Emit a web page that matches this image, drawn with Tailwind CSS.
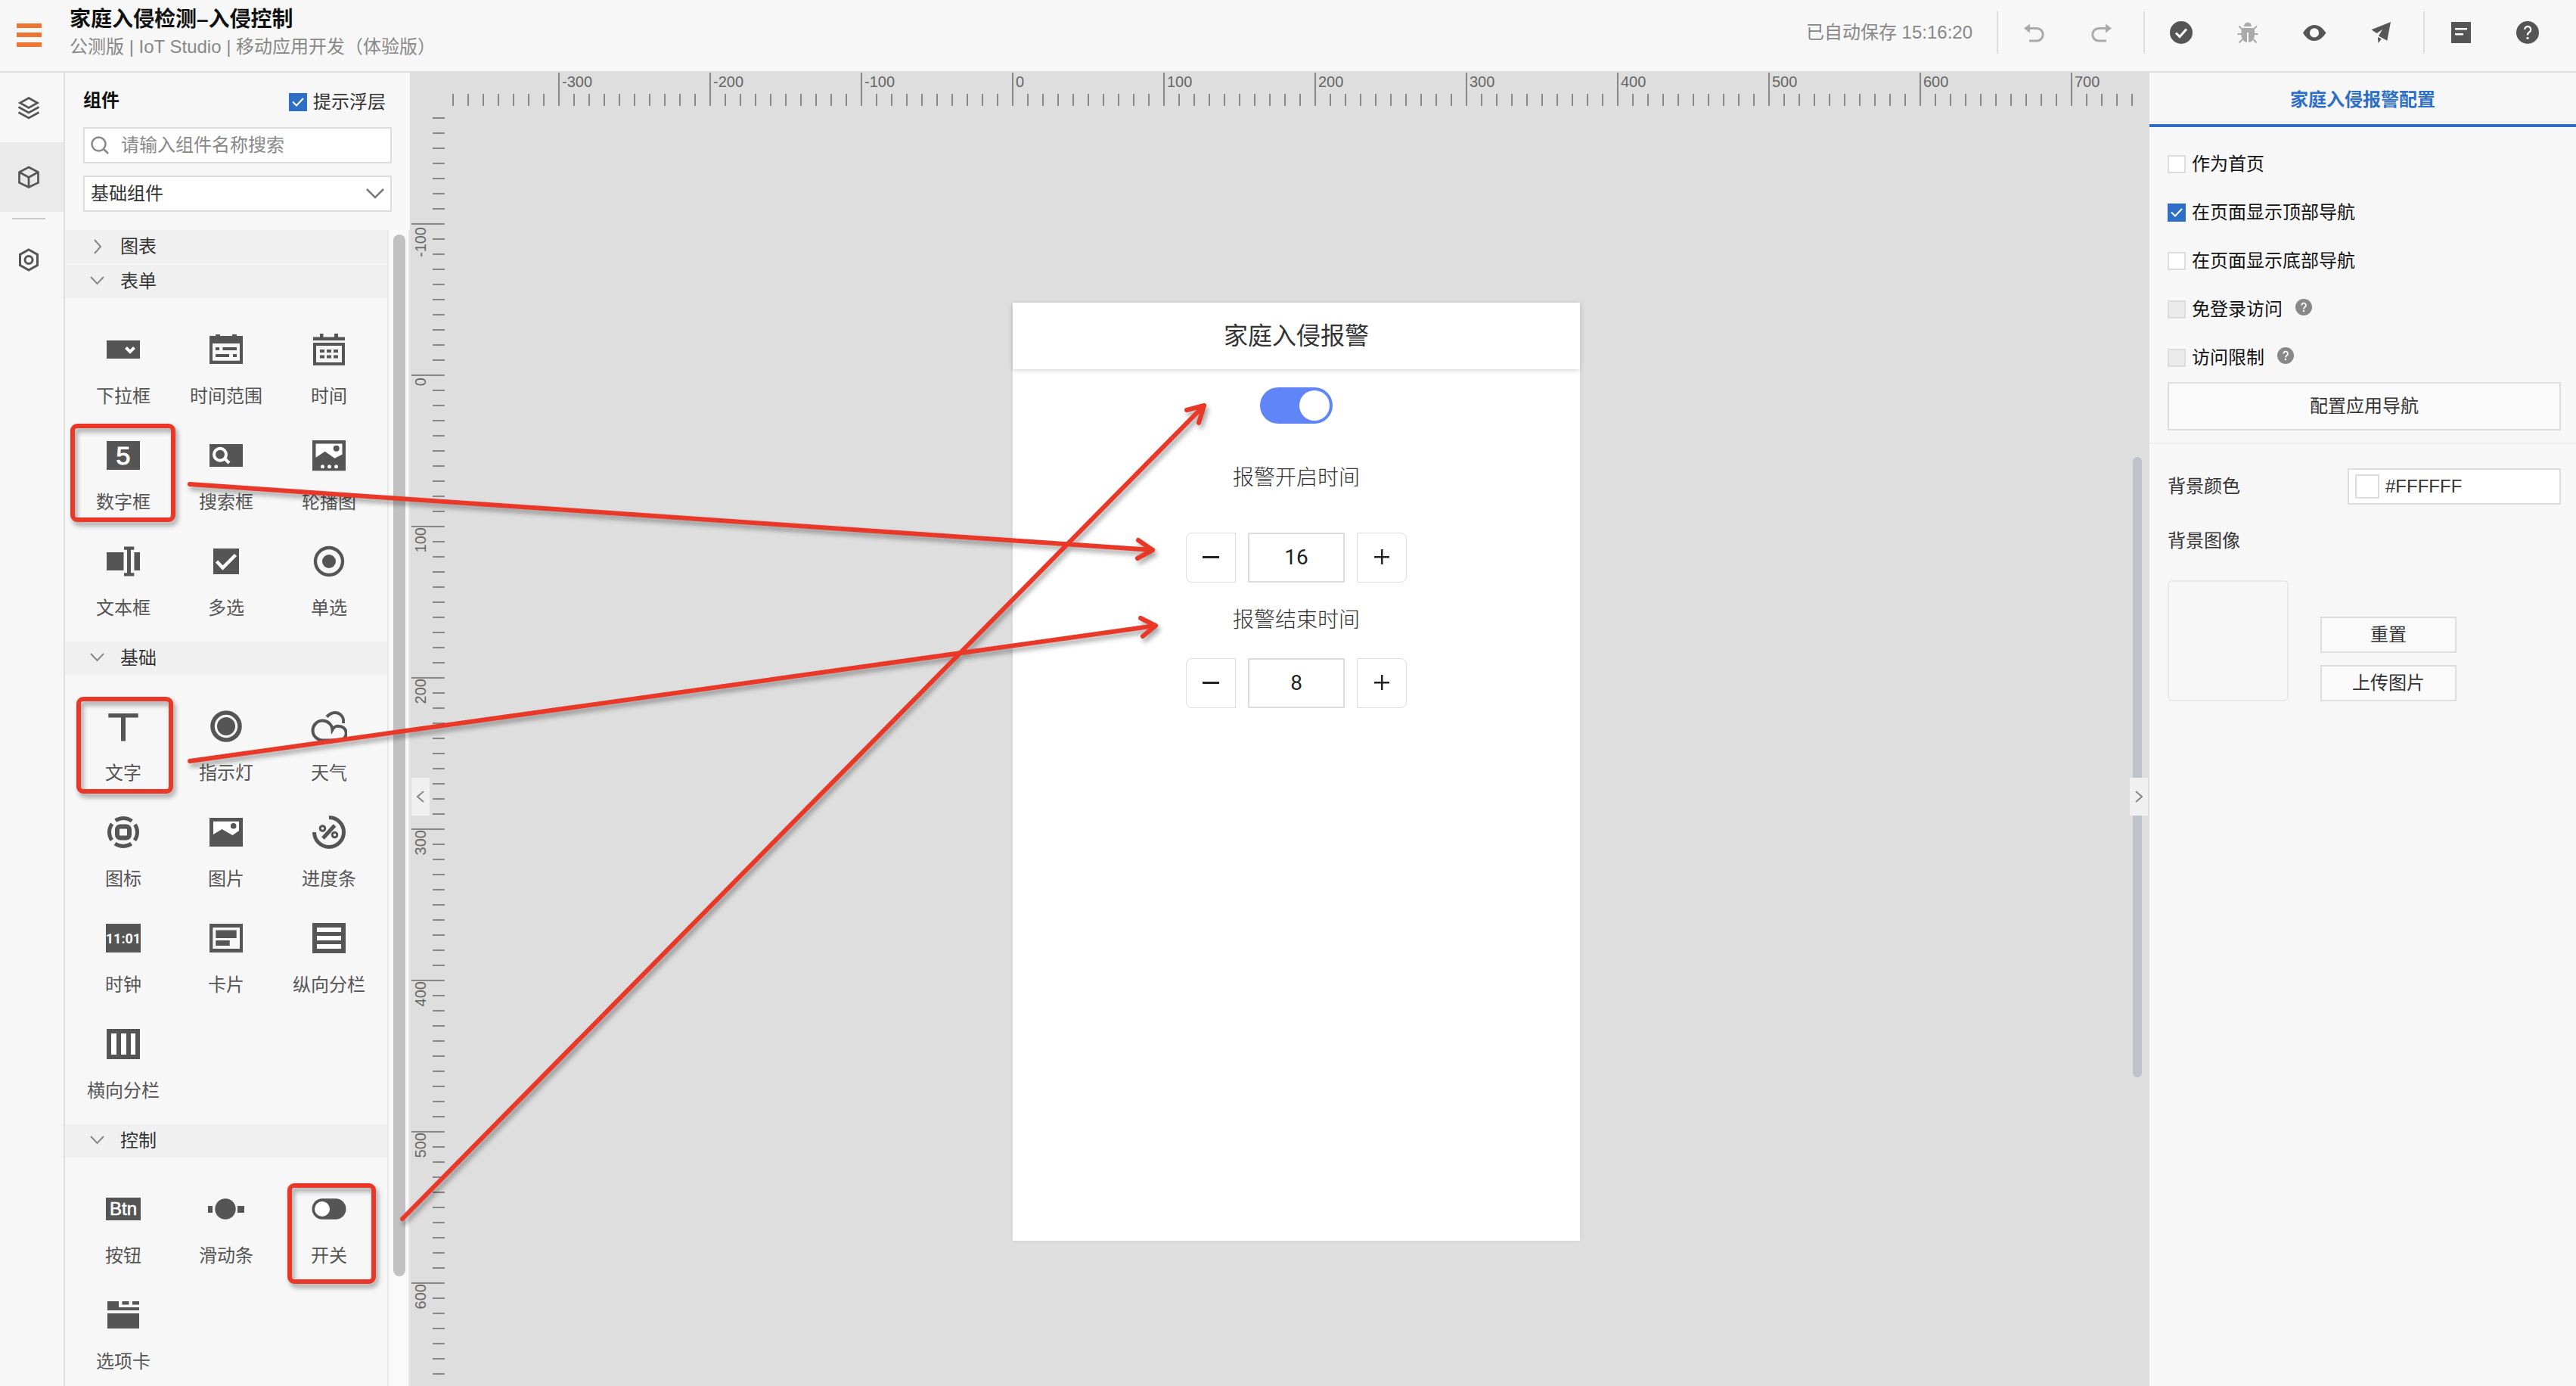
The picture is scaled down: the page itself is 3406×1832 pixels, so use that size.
<!DOCTYPE html>
<html lang="zh-CN">
<head>
<meta charset="utf-8">
<title>家庭入侵检测–入侵控制</title>
<script src="https://cdn.jsdelivr.net/npm/@tailwindcss/browser@4"></script>
</head>
<body class="relative flex h-screen flex-col overflow-hidden bg-[#f7f7f7] font-['Liberation_Sans','Noto_Sans_CJK_SC',sans-serif] text-2xl leading-8 text-[#333]">

<header class="flex h-24 shrink-0 items-center border-b-2 border-[#ddd] pr-12 pl-[22px]">
  <button aria-label="菜单" class="mr-[37px]">
    <svg class="block h-8 w-[33px]" viewBox="0 0 33 32" fill="#ec7532"><path d="M0 0h33v6H0zM0 12h33v6H0zM0 25h33v6H0z"/></svg>
  </button>
  <div class="flex flex-1 flex-col pb-1.5">
    <h1 class="text-[28px] leading-9 font-bold text-[#111]">家庭入侵检测–入侵控制</h1>
    <p class="leading-9 text-[#888]">公测版 | IoT Studio | 移动应用开发（体验版）</p>
  </div>
  <div class="flex items-center pb-2">
    <p class="pr-8 text-[#888]">已自动保存 15:16:20</p>
    <div class="flex h-14 items-center gap-14 border-l-2 border-[#ddd] pr-10 pl-8">
      <button aria-label="撤销"><svg class="block size-8" viewBox="0 0 32 32" fill="none" stroke="#aaa" stroke-width="3"><path d="M6 10.500h13a8 8 0 0 1 0 16.500h-10"/><path d="M10 4.500v12L2 10.500z" fill="#aaa" stroke="none"/></svg></button>
      <button aria-label="重做"><svg class="block size-8" viewBox="0 0 32 32" fill="none" stroke="#aaa" stroke-width="3"><path d="M26 10.500H13a8 8 0 0 0 0 16.500h10"/><path d="M22 4.500v12l8-6z" fill="#aaa" stroke="none"/></svg></button>
    </div>
    <div class="flex h-14 items-center gap-14 border-l-2 border-[#ddd] pr-10 pl-8">
      <button aria-label="检查"><svg class="block size-8" viewBox="0 0 32 32" fill="none"><circle cx="16" cy="16" r="15" fill="#555"/><path d="M9 16.500l5 5 9-10" stroke="#fff" stroke-width="3"/></svg></button>
      <button aria-label="调试"><svg class="block size-8" viewBox="0 0 32 32" fill="none" stroke="#aaa" stroke-width="2"><path d="M11 8a5 5.500 0 0 1 10 0zM7.500 10h17.500v10a8.700 9 0 0 1-17.500 0z" fill="#aaa" stroke="none"/><path d="M16 16v14" stroke="#f7f7f7"/><path d="M8 11.500L4.500 7.500M24 11.500L28 7.500M8 18H2.500M24 18h5.500M9 25l-4.500 4.500M23.500 25l4 4.500"/></svg></button>
      <button aria-label="预览"><svg class="block size-8" viewBox="0 0 32 32"><path fill="#555" fill-rule="evenodd" d="M1 16.500C5 10 10 6 16 6s11 4 15.500 10.500C27 23 22 27 16 27S5 23 1 16.500zM16 10.300a6 6 0 1 0 0 12.200 6 6 0 0 0 0-12.200z"/></svg></button>
      <button aria-label="发布"><svg class="block size-8" viewBox="0 0 32 32" fill="#555"><path d="M29 2L3.500 12.300l7 4.700L18 12l-5 8.500 11.300 6.300zM12 22l4.700 2.600L12.500 30z"/></svg></button>
    </div>
    <div class="flex h-14 items-center gap-14 border-l-2 border-[#ddd] pl-8">
      <button aria-label="文档"><svg class="block size-8" viewBox="0 0 32 32"><path fill="#555" d="M3 2h26v28H3z"/><path stroke="#fff" stroke-width="2.500" d="M8 11.300h16M8 18.300h11"/></svg></button>
      <button aria-label="帮助"><svg class="block size-8" viewBox="0 0 32 32" fill="none"><circle cx="16" cy="16" r="15" fill="#555"/><path d="M12.200 12a4 4 0 1 1 6 3.500c-1.600 1-2.200 1.800-2.200 4" stroke="#fff" stroke-width="2.300"/><circle cx="16" cy="23.300" r="1.600" fill="#fff"/></svg></button>
    </div>
  </div>
</header>

<div class="flex min-h-0 flex-1">
  <nav class="flex w-[86px] shrink-0 flex-col border-r-2 border-[#ddd] [&>button]:flex [&>button]:h-[92px] [&>button]:shrink-0 [&>button]:items-center [&>button]:pl-[22px]">
    <button aria-label="图层"><svg class="block size-8" viewBox="0 0 32 32" fill="none" stroke="#555" stroke-width="2.700"><path d="M16 3.500l11.500 6.500L16 16.500 4.500 10z"/><path d="M2.500 15.500L16 23l13.500-7.500M2.500 22.500L16 30l13.500-7.500"/></svg></button>
    <button aria-label="组件" class="bg-[#eaeaea]"><svg class="block size-8" viewBox="0 0 32 32" fill="none" stroke="#555" stroke-width="2.700"><path d="M16 3l12.500 6.500v14L16 29.500 3.500 23.500v-14zM3.500 9.500L16 16.500l12.500-7M16 16.500v13"/></svg></button>
    <div class="mt-2 mb-2 ml-4 h-0.5 w-11 bg-[#ccc]"></div>
    <button aria-label="设置"><svg class="block size-8" viewBox="0 0 32 32" fill="none" stroke="#555" stroke-width="3"><path d="M16 2l11.500 6.500v14L16 29 4.500 22.500v-14z"/><circle cx="16" cy="15.500" r="5"/></svg></button>
  </nav>

  <aside class="flex w-[456px] shrink-0 flex-col pt-6">
    <div class="flex items-start justify-between pr-8 pl-6">
      <h2 class="leading-[26px] font-bold text-[#111]">组件</h2>
      <label class="flex items-center gap-2 leading-[30px] text-[#333]">
        <span class="grid"><input type="checkbox" checked class="peer col-start-1 row-start-1 size-6 appearance-none border-2 border-[#ddd] bg-white checked:border-[#2d6fc7] checked:bg-[#2d6fc7]"><svg class="pointer-events-none col-start-1 row-start-1 hidden size-6 peer-checked:block" viewBox="0 0 24 24" fill="none" stroke="#fff" stroke-width="2"><path d="M5 11.500l5 5 9-9.500"/></svg></span>
        提示浮层
      </label>
    </div>
    <div class="mt-[18px] flex flex-col gap-4 px-6">
      <label class="flex h-12 items-center gap-4 border-2 border-[#ddd] bg-white pl-2">
        <svg class="block size-6" viewBox="0 0 24 24" fill="none" stroke="#888" stroke-width="2.500"><circle cx="10.500" cy="10.500" r="9"/><path d="M17 17l6 6"/></svg>
        <input type="text" aria-label="搜索组件" placeholder="请输入组件名称搜索" class="min-w-0 flex-1 outline-none placeholder:text-[#888]">
      </label>
      <div class="grid">
        <select aria-label="组件分类" class="col-start-1 row-start-1 h-12 appearance-none border-2 border-[#ddd] bg-white pl-2"><option>基础组件</option></select>
        <svg class="pointer-events-none col-start-1 row-start-1 mr-2.5 h-4 w-6 self-center justify-self-end" viewBox="0 0 24 16" fill="none" stroke="#777" stroke-width="2.500"><path d="M1 2l11 11L23 2"/></svg>
      </div>
    </div>

    <div class="mt-6 flex min-h-0 flex-1">
      <div class="flex-1 overflow-hidden [&_button>svg]:block [&_h3]:flex [&_h3]:h-11 [&_h3]:items-center [&_h3]:bg-[#f0f0f0] [&_h3]:pl-[33px] [&_h3>svg]:mr-5 [&_h3>svg]:h-4 [&_h3>svg]:w-5 [&_section>div]:grid [&_section>div]:grid-cols-3 [&_section>div]:px-[9px] [&_section>div]:pt-[34px] [&_section>div>button]:flex [&_section>div>button]:h-[140px] [&_section>div>button]:flex-col [&_section>div>button]:items-center [&_section>div>button]:pt-2.5 [&_section>div>button]:leading-7 [&_section>div>button]:text-[#555] [&_section>div>button>svg]:mb-6 [&_section>div>button>svg]:size-12">
        <h3 class="mb-0.5"><svg viewBox="0 0 20 16" fill="none" stroke="#888" stroke-width="2" class="overflow-visible"><path d="M6-1l8 9-8 9"/></svg>图表</h3>
        <section>
          <h3><svg viewBox="0 0 20 16" fill="none" stroke="#888" stroke-width="2"><path d="M1 2l8.500 9L18 2"/></svg>表单</h3>
          <div>
            <button><svg viewBox="0 0 48 48"><path fill="#555" d="M2 12h44v24H2z"/><path fill="none" stroke="#fff" stroke-width="4" d="M27.500 21.500l5.500 5.500 5.500-5.500"/></svg>下拉框</button>
            <button><svg viewBox="0 0 48 48" fill="#555"><path fill-rule="evenodd" d="M2 6h8V4h6v2h16V4h6v2h8v37H2zM6 16v22.700h36V16z"/><path d="M10 21h5v4h-5zM19.500 21H38v4H19.500zM10 30h18v4H10zM33 30h5v4h-5z"/></svg>时间范围</button>
            <button><svg viewBox="0 0 48 48" fill="#555"><path fill-rule="evenodd" d="M3 7.500h9V3h4.500v4.500H31V3h5v4.500h9V12H3zM3 15h42v30H3zM7 19v22h34V19z"/><path d="M12 24h6v4h-6zM21 24h6v4h-6zM30 24h6v4h-6zM12 31.500h6v4h-6zM21 31.500h6v4h-6zM30 31.500h6v4h-6z"/></svg>时间</button>
            <button><svg viewBox="0 0 48 48"><path fill="#555" d="M2 5h44v38H2z"/><text x="24" y="36" text-anchor="middle" font-family="Liberation Sans" font-size="34" fill="#fff" stroke="#fff">5</text></svg>数字框</button>
            <button><svg viewBox="0 0 48 48"><path fill="#555" d="M2 9h44v30H2z"/><g fill="none" stroke="#fff" stroke-width="4"><circle cx="16" cy="22.700" r="8"/><path d="M21.500 27.500l6.500 6.500"/></g></svg>搜索框</button>
            <button><svg viewBox="0 0 48 48"><path fill="#555" d="M2 4h44v40.300H2z"/><g fill="#fff"><path d="M6.500 8.500h35v14.200l-10 5-12.800-9-12.200 8z"/><circle cx="15.500" cy="38.700" r="2.500"/><circle cx="24.500" cy="38.700" r="2.500"/><circle cx="33.500" cy="38.700" r="2.500"/></g><circle cx="33.700" cy="14.700" r="4" fill="#555"/></svg>轮播图</button>
            <button><svg viewBox="0 0 48 48" fill="#555"><path d="M2 12h22.500v24H2zM38.500 12H46v24h-7.500zM25 4.500h13.300v4.200H34v30.500h4.300v4.200H25v-4.200h4V8.700h-4z"/></svg>文本框</button>
            <button><svg viewBox="0 0 48 48"><path fill="#555" d="M7 7h34v34H7z"/><path fill="none" stroke="#fff" stroke-width="4.500" d="M11.500 24l8 8.500 17-17"/></svg>多选</button>
            <button><svg viewBox="0 0 48 48"><circle cx="24" cy="24" r="18" fill="none" stroke="#555" stroke-width="4.300"/><circle cx="24" cy="24" r="9" fill="#555"/></svg>单选</button>
          </div>
        </section>
        <section>
          <h3><svg viewBox="0 0 20 16" fill="none" stroke="#888" stroke-width="2"><path d="M1 2l8.500 9L18 2"/></svg>基础</h3>
          <div>
            <button><svg viewBox="0 0 48 48"><path fill="#555" d="M4.300 7h39.400v5.600H27v31h-6v-31H4.300z"/></svg>文字</button>
            <button><svg viewBox="0 0 48 48"><circle cx="24" cy="24" r="18" fill="none" stroke="#555" stroke-width="5.600"/><circle cx="24" cy="24" r="12" fill="#555"/></svg>指示灯</button>
            <button><svg viewBox="0 0 48 48" fill="none" stroke="#555" stroke-width="4"><path d="M16 42.500A13 13 0 1 1 28.500 28.500C31 24 35 23.500 37 24a9 9 0 0 1 1 18.500z"/><path d="M21 11.500C31 1 45 7 43 20"/></svg>天气</button>
            <button><svg viewBox="0 0 48 48" fill="none" stroke="#555"><circle cx="24" cy="24" r="18.500" stroke-width="5" stroke-dasharray="23 6.060" stroke-dashoffset="11.500"/><rect x="16" y="16.500" width="16" height="15" rx="4" stroke-width="6"/></svg>图标</button>
            <button><svg viewBox="0 0 48 48"><path fill="#555" d="M2 5h44v38H2z"/><path fill="#fff" d="M7 9.700h34V22l-8.500 6-14-8L7 27z"/><circle cx="33.700" cy="15.800" r="3.800" fill="#555"/></svg>图片</button>
            <button><svg viewBox="0 0 48 48" fill="none" stroke="#555"><path stroke-width="5" d="M24 4.500A19.500 19.500 0 1 1 4.500 24"/><circle cx="15.500" cy="19" r="3.300" stroke-width="3"/><circle cx="31.500" cy="27.500" r="3.300" stroke-width="3"/><path stroke-width="5" d="M31.500 15L16 32"/></svg>进度条</button>
            <button><svg viewBox="0 0 48 48"><path fill="#555" d="M1 5h46v38H1z"/><text x="24" y="31" text-anchor="middle" font-family="Roboto" font-weight="700" font-size="18" fill="#fff">11:01</text></svg>时钟</button>
            <button><svg viewBox="0 0 48 48" fill="#555"><path fill-rule="evenodd" d="M2 5h44v38H2zM6.300 10v28H42V10z"/><path d="M10.300 13.400h27.400V24H10.300zM10.300 27h18.400v7H10.300z"/></svg>卡片</button>
            <button><svg viewBox="0 0 48 48"><path fill="#555" d="M2 4h44v40H2z"/><path fill="#fff" d="M8 10h32v6H8zM8 21h32v6H8zM8 32h32v6H8z"/></svg>纵向分栏</button>
            <button><svg viewBox="0 0 48 48"><path fill="#555" d="M2 4h44v40H2z"/><path fill="#fff" d="M8 10h7v28H8zM21 10h7v28h-7zM34 10h6v28h-6z"/></svg>横向分栏</button>
          </div>
        </section>
        <section>
          <h3><svg viewBox="0 0 20 16" fill="none" stroke="#888" stroke-width="2"><path d="M1 2l8.500 9L18 2"/></svg>控制</h3>
          <div>
            <button><svg viewBox="0 0 48 48"><path fill="#555" d="M1 9h46v30H1z"/><text x="24" y="32" text-anchor="middle" font-family="Liberation Sans" font-size="24" fill="#fff" stroke="#fff" stroke-width="0.600">Btn</text></svg>按钮</button>
            <button><svg viewBox="0 0 48 48" fill="#555"><circle cx="23" cy="24" r="13.700"/><path d="M0 20h6v9H0zM39 20h9v9h-9z"/></svg>滑动条</button>
            <button><svg viewBox="0 0 48 48"><rect x="1.500" y="10.300" width="45" height="27.400" rx="13.700" fill="#555"/><circle cx="15" cy="24" r="10" fill="#fff"/></svg>开关</button>
            <button><svg viewBox="0 0 48 48" fill="#555"><path d="M3 6h15v8h27v4H3zM22.500 6h9v4.500h-9zM36 6h9v4.500h-9zM3 22h42v20H3z"/></svg>选项卡</button>
          </div>
        </section>
      </div>
      <div class="w-[30px] border-x-2 border-[#e8e8e8] bg-[#fafafa] pt-1.5 pl-1.5">
        <div class="h-[90.5%] w-4 rounded-full bg-[#c1c1c1]"></div>
      </div>
    </div>
  </aside>

  <main class="relative grid min-w-0 flex-1 grid-cols-[46px_1fr] grid-rows-[44px_1fr] overflow-hidden bg-[#dedede]">
    <svg class="col-start-2 h-11 w-[calc(100%-22px)]" font-family="Liberation Sans" font-size="20" fill="#666">
      <defs><pattern id="tx" x="10" y="0" width="20" height="44" patternUnits="userSpaceOnUse"><path fill="#888" d="M0 28h2v16H0z"/></pattern></defs>
      <rect width="100%" height="100%" fill="url(#tx)"/>
      <path fill="#888" d="M150 0h2v44h-2zM350 0h2v44h-2zM550 0h2v44h-2zM750 0h2v44h-2zM950 0h2v44h-2zM1150 0h2v44h-2zM1350 0h2v44h-2zM1550 0h2v44h-2zM1750 0h2v44h-2zM1950 0h2v44h-2zM2150 0h2v44h-2z"/>
      <text x="155" y="19">-300</text><text x="355" y="19">-200</text><text x="555" y="19">-100</text><text x="755" y="19">0</text><text x="955" y="19">100</text><text x="1155" y="19">200</text><text x="1355" y="19">300</text><text x="1555" y="19">400</text><text x="1755" y="19">500</text><text x="1955" y="19">600</text><text x="2155" y="19">700</text>
    </svg>
    <svg class="col-start-1 row-start-2 h-full w-[46px]" font-family="Liberation Sans" font-size="20" fill="#666" text-anchor="end">
      <defs><pattern id="ty" x="0" y="15" width="46" height="20" patternUnits="userSpaceOnUse"><path fill="#888" d="M30 0h16v2H30z"/></pattern></defs>
      <rect width="46" height="100%" fill="url(#ty)"/>
      <path fill="#888" d="M2 155h44v2H2zM2 355h44v2H2zM2 555h44v2H2zM2 755h44v2H2zM2 955h44v2H2zM2 1155h44v2H2zM2 1355h44v2H2zM2 1555h44v2H2z"/>
      <text transform="translate(21 160) rotate(-90)">-100</text><text transform="translate(21 359) rotate(-90)">0</text><text transform="translate(21 557) rotate(-90)">100</text><text transform="translate(21 757) rotate(-90)">200</text><text transform="translate(21 957) rotate(-90)">300</text><text transform="translate(21 1157) rotate(-90)">400</text><text transform="translate(21 1357) rotate(-90)">500</text><text transform="translate(21 1557) rotate(-90)">600</text>
    </svg>
    <div class="col-start-2 row-start-2 flex items-start justify-center pt-[260px] pr-0.5">
      <div class="flex h-[1240px] w-[750px] flex-col items-center bg-white font-['Roboto','Noto_Sans_CJK_SC',sans-serif] text-[28px] leading-10 shadow-[0_0_6px_rgba(0,0,0,0.06)]">
        <h2 class="flex h-[88px] w-full items-center justify-center text-[32px] text-[#333] shadow-[0_2px_6px_rgba(0,0,0,0.15)]">家庭入侵报警</h2>
        <button role="switch" aria-checked="true" aria-label="报警开关" class="mt-6 flex h-12 w-24 justify-end rounded-full bg-[#5f85f7] p-1"><span class="size-10 rounded-full bg-white"></span></button>
        <p class="mt-[52px] font-light text-[#333]">报警开启时间</p>
        <div class="mt-[52px] flex h-[66px] gap-4 text-[#222]">
          <button aria-label="减少" class="flex w-[66px] items-center justify-center rounded-l-lg border border-[#ddd]"><svg class="size-6" viewBox="0 0 24 24"><path fill="#222" d="M1 10h22v3H1z"/></svg></button>
          <input type="text" value="16" aria-label="报警开启时间" class="w-32 border-2 border-[#ddd] text-center">
          <button aria-label="增加" class="flex w-[66px] items-center justify-center rounded-r-lg border border-[#ddd]"><svg class="size-6" viewBox="0 0 24 24"><path fill="#222" d="M2 10h9V1h2.500v9H22v2.500h-8.500V21H11v-8.500H2z"/></svg></button>
        </div>
        <p class="mt-[30px] font-light text-[#333]">报警结束时间</p>
        <div class="mt-[30px] flex h-[66px] gap-4 text-[#222]">
          <button aria-label="减少" class="flex w-[66px] items-center justify-center rounded-l-lg border border-[#ddd]"><svg class="size-6" viewBox="0 0 24 24"><path fill="#222" d="M1 10h22v3H1z"/></svg></button>
          <input type="text" value="8" aria-label="报警结束时间" class="w-32 border-2 border-[#ddd] text-center">
          <button aria-label="增加" class="flex w-[66px] items-center justify-center rounded-r-lg border border-[#ddd]"><svg class="size-6" viewBox="0 0 24 24"><path fill="#222" d="M2 10h9V1h2.500v9H22v2.500h-8.500V21H11v-8.500H2z"/></svg></button>
        </div>
      </div>
    </div>
    <div class="absolute top-[508px] right-2.5 h-[820px] w-3 rounded-full bg-[#bdc3cb]"></div>
    <button aria-label="收起左侧" class="absolute top-[932px] left-0.5 flex h-[50px] w-6 items-center justify-center bg-[#f0f0f0]"><svg class="h-4 w-2.5" viewBox="0 0 10 16" fill="none" stroke="#888" stroke-width="2"><path d="M9 1L1 8l8 7"/></svg></button>
    <button aria-label="收起右侧" class="absolute top-[932px] right-0.5 flex h-[50px] w-6 items-center justify-center bg-[#f0f0f0]"><svg class="h-4 w-2.5" viewBox="0 0 10 16" fill="none" stroke="#888" stroke-width="2"><path d="M1 1l8 7-8 7"/></svg></button>
  </main>

  <aside class="w-[564px] shrink-0">
    <div class="border-b-2 border-[#eee] pt-5 pb-3 text-center font-bold text-[#2d6fc7]">家庭入侵报警配置</div>
    <div class="mt-0.5 h-1 bg-[#2d6fc7]"></div>
    <div class="flex flex-col gap-8 px-6 pt-[33px] text-[#111] [&_input]:size-6 [&_input]:appearance-none [&_input]:border-2 [&_input]:border-[#ddd] [&_input]:bg-white [&_label]:flex [&_label]:items-center [&_label]:gap-2">
      <label><input type="checkbox">作为首页</label>
      <label><span class="grid"><input type="checkbox" checked class="peer col-start-1 row-start-1 checked:border-[#2d6fc7]! checked:bg-[#2d6fc7]!"><svg class="pointer-events-none col-start-1 row-start-1 hidden size-6 peer-checked:block" viewBox="0 0 24 24" fill="none" stroke="#fff" stroke-width="2"><path d="M5 11.500l5 5 9-9.500"/></svg></span>在页面显示顶部导航</label>
      <label><input type="checkbox">在页面显示底部导航</label>
      <div class="flex gap-4"><label><input type="checkbox" disabled class="disabled:bg-[#ebebeb]!">免登录访问</label><svg class="size-6" viewBox="0 0 24 24" fill="none"><circle cx="12" cy="13" r="11" fill="#888"/><path d="M9.300 10.500a2.800 2.800 0 1 1 4.200 2.400c-1.100.7-1.500 1.200-1.500 2.600" stroke="#fff" stroke-width="1.800"/><circle cx="12" cy="18" r="1.200" fill="#fff"/></svg></div>
      <div class="flex gap-4"><label><input type="checkbox" disabled class="disabled:bg-[#ebebeb]!">访问限制</label><svg class="size-6" viewBox="0 0 24 24" fill="none"><circle cx="12" cy="13" r="11" fill="#888"/><path d="M9.300 10.500a2.800 2.800 0 1 1 4.200 2.400c-1.100.7-1.500 1.200-1.500 2.600" stroke="#fff" stroke-width="1.800"/><circle cx="12" cy="18" r="1.200" fill="#fff"/></svg></div>
    </div>
    <div class="border-b-2 border-[#eee] pt-4 pr-5 pb-4 pl-6"><button class="h-16 w-full border-2 border-[#ddd] bg-[#fafafa]">配置应用导航</button></div>
    <div class="flex items-center justify-between pt-8 pr-5 pl-6">
      <label for="bg">背景颜色</label>
      <div class="flex h-12 w-[282px] items-center gap-2 border-2 border-[#ddd] bg-white pl-2">
        <span class="size-8 border-2 border-[#ddd] bg-white"></span>
        <input id="bg" type="text" value="#FFFFFF" class="min-w-0 flex-1 outline-none">
      </div>
    </div>
    <div class="pt-8 pl-6">背景图像</div>
    <div class="flex items-end gap-[42px] pt-9 pl-6">
      <div class="size-40 rounded-md border-2 border-[#e9eaec]"></div>
      <div class="flex w-[180px] flex-col gap-4">
        <button class="h-12 border-2 border-[#ddd] bg-[#fafafa]">重置</button>
        <button class="h-12 border-2 border-[#ddd] bg-[#fafafa]">上传图片</button>
      </div>
    </div>
  </aside>
</div>

<svg class="pointer-events-none absolute top-0 left-0 h-[1832px] w-[1700px] drop-shadow-[3px_5px_3px_rgba(0,0,0,0.35)]" viewBox="0 0 1700 1832" fill="none" stroke="#e93827" stroke-width="6" stroke-linecap="round" stroke-linejoin="round">
  <rect x="96" y="563" width="133" height="124" rx="6"/>
  <rect x="104" y="924" width="122" height="122" rx="6"/>
  <rect x="383" y="1567" width="111" height="127" rx="6"/>
  <path d="M251 640L1524 727M1505 714l19 13-20 11"/>
  <path d="M251 1006L1528 827M1508 817l20 10-17 14"/>
  <path d="M532 1611L1592 536M1569 542l23-6-7 23"/>
</svg>
</body>
</html>
